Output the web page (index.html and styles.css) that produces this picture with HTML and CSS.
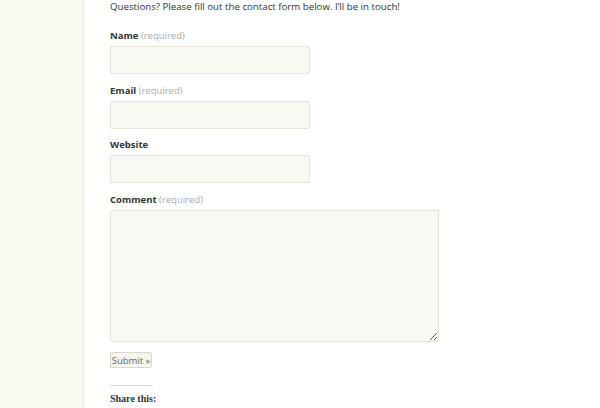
FILE: index.html
```html
<!DOCTYPE html>
<html>
<head>
<meta charset="utf-8">
<link rel="stylesheet" href="styles.css">
</head>
<body>
<div class="page">
  <aside class="sidebar"></aside>
  <main class="content">
    <p class="intro">Questions? Please fill out the contact form below. I’ll be in touch!</p>
    <form class="form">
      <div class="field">
        <label class="label">Name <span class="req">(required)</span></label>
        <input class="input" type="text">
      </div>
      <div class="field">
        <label class="label">Email <span class="req">(required)</span></label>
        <input class="input" type="text">
      </div>
      <div class="field">
        <label class="label">Website</label>
        <input class="input" type="text">
      </div>
      <div class="field">
        <label class="label">Comment <span class="req">(required)</span></label>
        <textarea class="textarea"></textarea>
      </div>
      <button class="submit" type="button">Submit »</button>
    </form>
    <div class="share">
      <h3 class="share-title">Share this:</h3>
    </div>
  </main>
</div>
</body>
</html>
```

FILE: styles.css
```css
html, body {
  margin: 0;
  padding: 0;
  background: #fff;
}
body {
  font-family: "Open Sans", "Liberation Sans", sans-serif;
  color: #333;
}
.page {
  display: flex;
  min-height: 408px;
}
.sidebar {
  width: 83px;
  flex: none;
  background: #f9f8f1;
  border-right: 1px solid #ebe9df;
}
.content {
  padding-left: 26px;
  flex: 1;
}
.intro {
  margin: 0;
  font-size: 9.7px;
  line-height: 14px;
}
.form {
  display: flex;
  flex-direction: column;
  align-items: flex-start;
  margin-top: 13px;
}
.field {
  display: flex;
  flex-direction: column;
  align-items: flex-start;
  margin-bottom: 7.5px;
}
.label {
  font-size: 9.5px;
  font-weight: 700;
  line-height: 18px;
  margin-bottom: 1px;
}
.req {
  font-weight: 400;
  color: #aaa;
}
.input, .textarea {
  box-sizing: border-box;
  background: #f9f8f2;
  border: 1px solid #e6e4d9;
  border-radius: 2px;
  margin: 0;
  padding: 2px;
  font: inherit;
}
.input {
  width: 200px;
  height: 28px;
}
.textarea {
  width: 329px;
  height: 132px;
  resize: vertical;
}
.submit {
  margin-top: 3px;
  box-sizing: border-box;
  height: 16px;
  width: 42px;
  padding: 0;
  font-family: "Open Sans", "Liberation Sans", sans-serif;
  font-size: 9.5px;
  color: #666;
  background: #f6f5ee;
  border: 1px solid #d9d7cc;
  border-radius: 2px;
}
.share {
  margin-top: 17px;
  border-top: 1px solid #ddd;
  width: 43px;
}
.share-title {
  margin: 6px 0 0;
  width: 100px;
  font-family: "Liberation Serif", "DejaVu Serif", serif;
  font-weight: 700;
  font-size: 10px;
  line-height: 13px;
  color: #333;
}
```
